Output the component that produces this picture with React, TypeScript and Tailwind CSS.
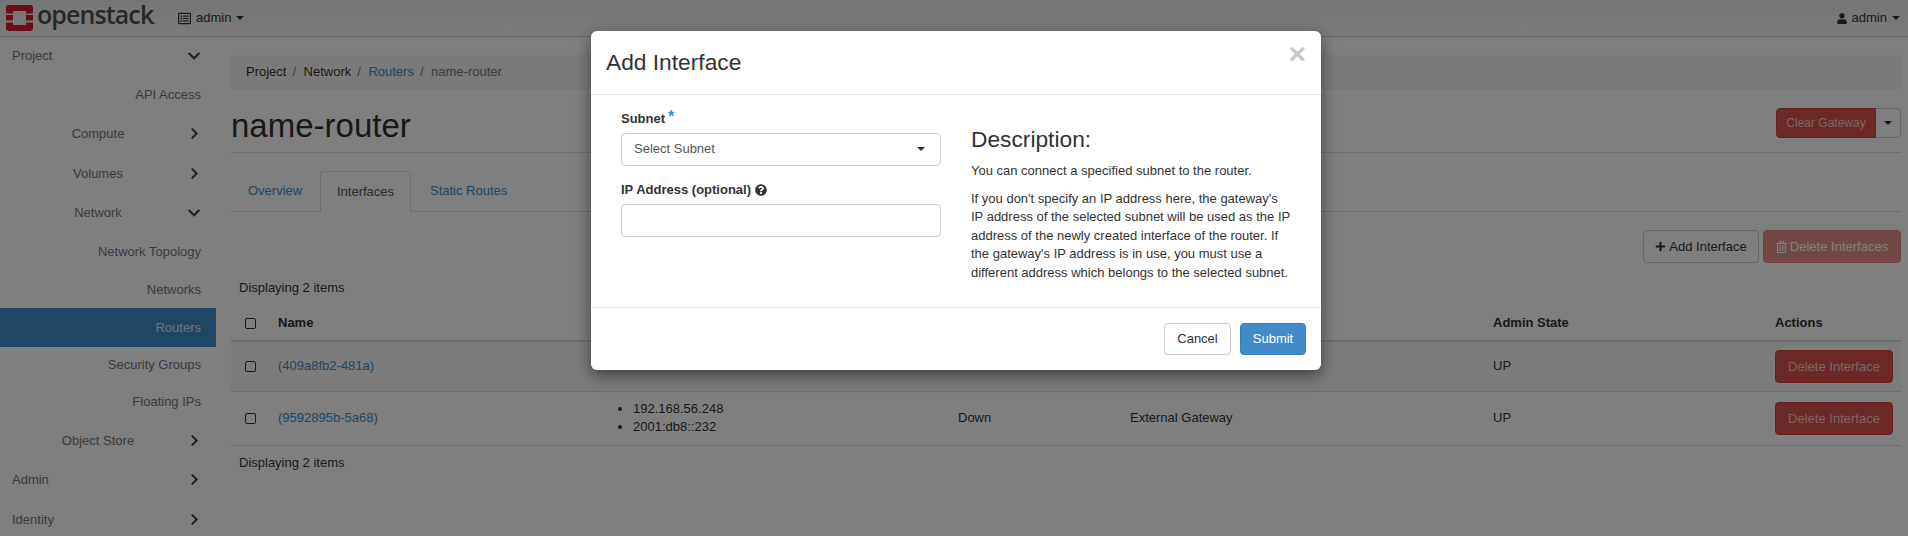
import React from "react";
import {
  FaChevronDown,
  FaChevronRight,
  FaPlus,
  FaRegListAlt,
  FaRegTrashAlt,
  FaUser,
  FaQuestionCircle,
} from "react-icons/fa";

const Caret = ({ className = "" }: { className?: string }) => (
  <span
    className={`inline-block w-0 h-0 border-x-[4px] border-x-transparent border-t-[4px] border-t-current ${className}`}
  />
);

const Logo = () => (
  <svg width="27" height="26" viewBox="0 0 27 26" className="shrink-0">
    <path
      fill="#da1a32"
      d="M3 0H24A3 3 0 0 1 27 3V8.5H20V6H7V8.5H0V3A3 3 0 0 1 3 0ZM0 17.5H7V20H20V17.5H27V23A3 3 0 0 1 24 26H3A3 3 0 0 1 0 23ZM0 10H7V15.5H0ZM20 10H27V15.5H20Z"
    />
  </svg>
);

const Chevron = ({ open }: { open?: boolean }) => (
  <span className="w-[24px] flex justify-center text-[#444]">
    {open ? <FaChevronDown className="w-[14px] h-[14px]" /> : <FaChevronRight className="w-[13px] h-[13px]" />}
  </span>
);

const Parent = ({ label, open, h = "h-[39px]" }: { label: string; open?: boolean; h?: string }) => (
  <div className={`flex items-center ${h} text-[#777]`}>
    <span className="w-[182px] pl-[14px] text-center">{label}</span>
    <Chevron open={open} />
  </div>
);

const Top = ({ label, open, h = "h-[39px]" }: { label: string; open?: boolean; h?: string }) => (
  <div className={`flex items-center ${h} text-[#777]`}>
    <span className="w-[182px] pl-[12px]">{label}</span>
    <Chevron open={open} />
  </div>
);

const Child = ({ label, h = "h-[38px]", active }: { label: string; h?: string; active?: boolean }) => (
  <div
    className={`flex items-center justify-end pr-[15px] ${h} ${active ? "bg-[#428bca] text-[#dfe9f3]" : "text-[#777]"}`}
  >
    {label}
  </div>
);

const Check = () => <span className="block w-[11px] h-[11px] rounded-[2px] border border-[#333] ml-[14px]" />;

const DeleteBtn = () => (
  <button className="block w-[118px] h-[33px] rounded-[4px] bg-[#d9534f] border border-[#d43f3a] text-[#f2d0cf]">
    Delete Interface
  </button>
);

const Crumb = ({ children, className }: { children: React.ReactNode; className: string }) => (
  <>
    <span className={className}>{children}</span>
    <span className="pl-[6px] pr-[7.5px] text-[#777]">/</span>
  </>
);

export default function App() {
  return (
    <div className="relative w-[1908px] h-[536px] overflow-hidden bg-white text-[13px] leading-[18px] text-[#333] font-['Liberation_Sans',Arial,sans-serif]">
      {/* navbar */}
      <header className="flex items-center h-[37px] border-b border-[#ccc] bg-gradient-to-b from-[#ebebeb] to-[#f8f8f8]">
        <div className="flex items-center pl-[6px] w-[178px]">
          <Logo />
          <span className="ml-[4px] mt-[-3px] text-[25px] leading-[28px] tracking-[-0.9px] font-semibold text-[#505050] font-['Open_Sans',sans-serif]">
            openstack
            <span className="text-[10px] text-[#888] tracking-normal">.</span>
          </span>
        </div>
        <FaRegListAlt className="w-[13px] h-[13px] text-[#333]" />
        <span className="ml-[5px] text-[#333] text-[13px]">admin</span>
        <Caret className="ml-[5px] text-[#333]" />
        <div className="ml-auto mr-[8px] flex items-center">
          <FaUser className="w-[10px] h-[11px] text-[#333]" />
          <span className="ml-[5px] text-[#333]">admin</span>
          <Caret className="ml-[5px] text-[#333]" />
        </div>
      </header>

      <div className="flex">
        {/* sidebar */}
        <aside className="w-[216px] shrink-0">
          <Top label="Project" open h="h-[38px]" />
          <Child label="API Access" h="h-[39px]" />
          <Parent label="Compute" />
          <Parent label="Volumes" h="h-[40px] pt-[1px]" />
          <Parent label="Network" open />
          <Child label="Network Topology" h="h-[40px]" />
          <Child label="Networks" h="h-[36px]" />
          <Child label="Routers" active h="h-[39px]" />
          <Child label="Security Groups" h="h-[36px]" />
          <Child label="Floating IPs" h="h-[38px]" />
          <Parent label="Object Store" />
          <Top label="Admin" />
          <Top label="Identity" h="h-[41px]" />
        </aside>

        {/* main */}
        <main className="ml-[15px] w-[1670px] pt-[18px]">
          <nav className="flex items-center h-[35px] pl-[15px] pb-[1px] rounded-[4px] bg-[#f5f5f5]">
            <Crumb className="text-[#333]">Project</Crumb>
            <Crumb className="text-[#333]">Network</Crumb>
            <Crumb className="text-[#428bca]">Routers</Crumb>
            <span className="text-[#777]">name-router</span>
          </nav>

          <div className="flex justify-between h-[63px] pt-[18px] border-b border-[#ddd]">
            <h1 className="text-[33px] leading-[36px] text-[#333]">name-router</h1>
            <div className="flex h-[30px]">
              <button className="w-[100px] rounded-l-[4px] bg-[#d9534f] border border-[#d43f3a] text-[12px] text-[#f2d0cf]">
                Clear Gateway
              </button>
              <button className="w-[25px] rounded-r-[4px] bg-white border border-l-0 border-[#ccc] flex items-center justify-center">
                <Caret className="text-[#333]" />
              </button>
            </div>
          </div>

          <div className="flex h-[41px] mt-[18px] border-b border-[#ddd]">
            <a className="w-[89px] pl-[17px] pt-[11px] text-[#428bca]">Overview</a>
            <a className="w-[91px] h-[41px] pl-[16px] pt-[11px] text-[#555] bg-white rounded-t-[4px] border border-[#ddd] border-b-white">
              Interfaces
            </a>
            <a className="pl-[19px] pt-[11px] text-[#428bca]">Static Routes</a>
          </div>

          <div className="flex justify-end gap-[4px] mt-[18px]">
            <button className="w-[116px] h-[33px] rounded-[4px] bg-white border border-[#ccc] flex items-center justify-center gap-[3px]">
              <FaPlus className="w-[11px] h-[11px]" />
              Add Interface
            </button>
            <button className="w-[138px] h-[33px] rounded-[4px] bg-[#d9534f] border border-[#d43f3a] opacity-65 text-white flex items-center justify-center gap-[3px]">
              <FaRegTrashAlt className="w-[11px] h-[12px]" />
              Delete Interfaces
            </button>
          </div>

          <div className="mt-[16px] pl-[8px]">Displaying 2 items</div>

          <table className="w-full table-fixed mt-[7px] border-separate border-spacing-0">
            <colgroup>
              <col className="w-[39px]" />
              <col className="w-[337px]" />
              <col className="w-[343px]" />
              <col className="w-[172px]" />
              <col className="w-[363px]" />
              <col className="w-[282px]" />
              <col className="w-[134px]" />
            </colgroup>
            <thead>
              <tr className="h-[38px] text-left [&>th]:border-b-2 [&>th]:border-[#ddd] [&>th]:pt-[2px]">
                <th>
                  <Check />
                </th>
                <th className="px-[8px]">Name</th>
                <th />
                <th />
                <th />
                <th className="px-[8px]">Admin State</th>
                <th className="px-[8px]">Actions</th>
              </tr>
            </thead>
            <tbody>
              <tr className="h-[50px] bg-[#f9f9f9] [&>td]:border-b [&>td]:border-[#ddd]">
                <td>
                  <Check />
                </td>
                <td className="px-[8px] pb-[1px] text-[#428bca]">(409a8fb2-481a)</td>
                <td />
                <td />
                <td />
                <td className="px-[8px] pb-[1px]">UP</td>
                <td className="px-[8px]">
                  <DeleteBtn />
                </td>
              </tr>
              <tr className="h-[54px] [&>td]:border-b [&>td]:border-[#ddd]">
                <td>
                  <Check />
                </td>
                <td className="px-[8px] pb-[1px] text-[#428bca]">(9592895b-5a68)</td>
                <td className="pb-[1px]">
                  <ul className="list-disc pl-[26px]">
                    <li>192.168.56.248</li>
                    <li>2001:db8::232</li>
                  </ul>
                </td>
                <td className="px-[8px] pb-[1px]">Down</td>
                <td className="px-[8px] pb-[1px]">External Gateway</td>
                <td className="px-[8px] pb-[1px]">UP</td>
                <td className="px-[8px]">
                  <DeleteBtn />
                </td>
              </tr>
            </tbody>
          </table>

          <div className="mt-[8px] pl-[8px]">Displaying 2 items</div>
        </main>
      </div>

      {/* backdrop */}
      <div className="absolute inset-0 bg-black/50" />

      {/* modal */}
      <div className="absolute left-[591px] top-[31px] w-[730px] h-[339px] flex flex-col rounded-[6px] bg-white shadow-[0_5px_15px_rgba(0,0,0,0.5)]">
        <div className="relative h-[64px] shrink-0 border-b border-[#e5e5e5] pl-[15px] pt-[18px]">
          <h2 className="text-[22.75px] leading-[26px] text-[#333]">Add Interface</h2>
          <span className="absolute right-[15px] top-[8px] text-[30px] leading-[30px] font-bold text-[#c8c8c8]">×</span>
        </div>
        <div className="flex h-[212px] shrink-0">
          <div className="w-[380px] shrink-0 pl-[30px] pt-[15px]">
            <div className="relative font-bold h-[23px]">
              Subnet
              <span className="absolute left-[47px] top-[-2px] text-[16px] text-[#428bca]">*</span>
            </div>
            <div className="flex items-center justify-between w-[320px] h-[33px] pl-[12px] pr-[15px] pb-[1px] rounded-[4px] border border-[#ccc] text-[#555]">
              Select Subnet
              <Caret className="text-[#333]" />
            </div>
            <div className="flex items-center gap-[4px] font-bold mt-[15px] h-[18px]">
              IP Address (optional)
              <FaQuestionCircle className="w-[12px] h-[12px]" />
            </div>
            <div className="w-[320px] h-[33px] mt-[5px] rounded-[4px] border border-[#ccc]" />
          </div>
          <div className="w-[330px] pt-[31px]">
            <h3 className="text-[22.75px] leading-[26px] text-[#333]">Description:</h3>
            <p className="mt-[10px] leading-[18.5px]">You can connect a specified subnet to the router.</p>
            <p className="mt-[9px] leading-[18.5px]">
              If you don't specify an IP address here, the gateway's
              <br />
              IP address of the selected subnet will be used as the IP
              <br />
              address of the newly created interface of the router. If
              <br />
              the gateway's IP address is in use, you must use a
              <br />
              different address which belongs to the selected subnet.
            </p>
          </div>
        </div>
        <div className="flex justify-end gap-[9px] flex-1 border-t border-[#e5e5e5] pt-[15px] pr-[15px]">
          <button className="w-[67px] h-[32px] rounded-[4px] bg-white border border-[#ccc]">Cancel</button>
          <button className="w-[66px] h-[32px] rounded-[4px] bg-[#428bca] border border-[#357ebd] text-white">
            Submit
          </button>
        </div>
      </div>
    </div>
  );
}
